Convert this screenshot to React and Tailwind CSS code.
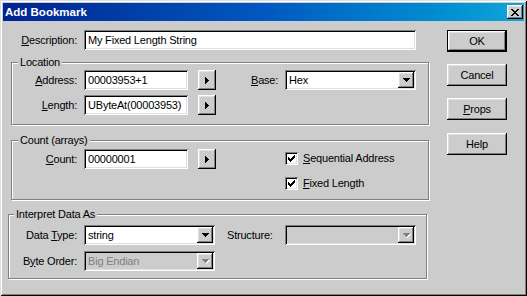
import React from 'react'

const raised = 'bg-[#cccccc] shadow-[inset_-1px_-1px_0_#000,inset_1px_1px_0_#fff,inset_-2px_-2px_0_#808080,inset_2px_2px_0_#dfdfdf]';
const sunken = 'shadow-[inset_1px_1px_0_#808080,inset_-1px_-1px_0_#fff,inset_2px_2px_0_#000,inset_-2px_-2px_0_#dfdfdf]';

const closeX = ['xx....xx', '.xx..xx.', '..xxxx..', '...xx...', '..xxxx..', '.xx..xx.', 'xx....xx'];
const rightArrow = ['x...', 'xx..', 'xxx.', 'xxxx', 'xxx.', 'xx..', 'x...'];
const downArrow = ['xxxxxxx', '.xxxxx.', '..xxx..', '...x...'];
const downArrowOff = ['xxxxxxx.', '.xxxxxww', '..xxxww.', '...xww..', '....w...'];
const check = ['......x', '.....xx', 'x...xxx', 'xx.xxx.', 'xxxxx..', '.xxx...', '..x....'];

// small pixel drawings, x = dark, w = white
function Pix({ rows, color = '#000' }) {
    return (
        <svg width={rows[0].length} height={rows.length} shapeRendering="crispEdges" className="block">
            {rows.flatMap((r, y) => [...r].map((c, x) => c === '.' ? null : (
                <rect key={x + '-' + y} x={x} y={y} width="1" height="1" fill={c === 'w' ? '#fff' : color} />
            )))}
        </svg>
    )
}

function U({ children }) {
    return <span className="underline decoration-1 underline-offset-[1px]">{children}</span>
}

function Field({ w, children }) {
    return (
        <div className={w + ' h-[20px] bg-white flex items-center pl-[4px] whitespace-nowrap overflow-hidden ' + sunken}>
            {children}
        </div>
    )
}

function Combo({ value, disabled }) {
    return (
        <div className={'w-[131px] h-[20px] flex items-center p-[2px] ' + sunken + (disabled ? ' bg-[#cccccc]' : ' bg-white')}>
            <div className={'flex-1 pl-[2px] whitespace-nowrap ' + (disabled ? 'text-[#808080]' : '')}>{value}</div>
            <div className={'w-[16px] h-[16px] flex items-center justify-center ' + raised}>
                {disabled ? <div className="ml-[1px] mt-[1px]"><Pix rows={downArrowOff} color="#808080" /></div> : <Pix rows={downArrow} />}
            </div>
        </div>
    )
}

function ArrowBtn() {
    return (
        <div className={'ml-[10px] w-[18px] h-[20px] flex items-center justify-center ' + raised}>
            <Pix rows={rightArrow} />
        </div>
    )
}

function Check({ children }) {
    return (
        <div className="flex items-center h-[13px]">
            <div className={'w-[13px] h-[13px] bg-white flex items-center justify-center ' + sunken}>
                <Pix rows={check} />
            </div>
            <span className="ml-[5px]">{children}</span>
        </div>
    )
}

function Group({ className, label, labelLeft, children }) {
    return (
        <div className={'relative border border-[#808080] shadow-[inset_1px_1px_0_#fff,1px_1px_0_#fff] ' + className}>
            <span className={'absolute -top-[7px] px-[2px] bg-[#cccccc] leading-[13px] ' + labelLeft}>{label}</span>
            {children}
        </div>
    )
}

function Button({ children, isDefault }) {
    if (isDefault) {
        return (
            <div className="w-[60px] h-[22px] border border-black">
                <div className={'w-full h-full flex items-center justify-center ' + raised}>{children}</div>
            </div>
        )
    }
    return <div className={'w-[60px] h-[22px] flex items-center justify-center ' + raised}>{children}</div>
}

export default function App() {
    return (
        <div className="w-[527px] h-[296px] bg-[#cccccc] p-[3px] font-['Liberation_Sans',Arial,sans-serif] text-[11px] leading-[13px] tracking-[-0.2px] text-black shadow-[inset_1px_1px_0_#dfdfdf,inset_-1px_-1px_0_#000,inset_2px_2px_0_#fff,inset_-2px_-2px_0_#808080]">
            <div className="h-[18px] flex items-center justify-between pl-[2px] pr-[1px] bg-gradient-to-r from-[#00238f] via-[#0058c0] to-[#12a6d8]">
                <span className="text-white font-bold text-[11.5px] tracking-normal">Add Bookmark</span>
                <div className={'w-[16px] h-[14px] flex items-center justify-center ' + raised}>
                    <Pix rows={closeX} />
                </div>
            </div>

            <div className="flex">
                <div className="w-[427px] flex flex-col">
                    <div className="flex items-center mt-[9px]">
                        <div className="w-[74px] text-right"><U>D</U>escription:</div>
                        <div className="ml-[7px]"><Field w="w-[332px]">My Fixed Length String</Field></div>
                    </div>

                    <Group className="ml-[8px] mt-[12px] w-[418px] h-[63px] pt-[7px]" label="Location" labelLeft="left-[6px]">
                        <div className="flex items-center">
                            <div className="w-[65px] text-right"><U>A</U>ddress:</div>
                            <div className="ml-[7px]"><Field w="w-[104px]">00003953+1</Field></div>
                            <ArrowBtn />
                            <div className="ml-[35px] w-[34px]"><U>B</U>ase:</div>
                            <Combo value="Hex" />
                        </div>
                        <div className="flex items-center mt-[5px]">
                            <div className="w-[65px] text-right"><U>L</U>ength:</div>
                            <div className="ml-[7px]"><Field w="w-[104px]">UByteAt(00003953)</Field></div>
                            <ArrowBtn />
                        </div>
                    </Group>

                    <Group className="ml-[8px] mt-[15px] w-[418px] h-[60px] pt-[8px]" label="Count (arrays)" labelLeft="left-[6px]">
                        <div className="flex items-start">
                            <div className="flex items-center">
                                <div className="w-[65px] text-right"><U>C</U>ount:</div>
                                <div className="ml-[7px]"><Field w="w-[104px]">00000001</Field></div>
                                <ArrowBtn />
                            </div>
                            <div className="ml-[69px] mt-[3px] flex flex-col gap-[12px]">
                                <Check><U>S</U>equential Address</Check>
                                <Check><U>F</U>ixed Length</Check>
                            </div>
                        </div>
                    </Group>

                    <Group className="ml-[5px] mt-[14px] w-[419px] h-[65px] pt-[10px]" label="Interpret Data As" labelLeft="left-[5px]">
                        <div className="flex items-center">
                            <div className="w-[68px] text-right">Data <U>T</U>ype:</div>
                            <div className="ml-[7px]"><Combo value="string" /></div>
                            <div className="ml-[12px] w-[58px]">Structure:</div>
                            <Combo value="" disabled />
                        </div>
                        <div className="flex items-center mt-[6px]">
                            <div className="w-[68px] text-right">B<U>y</U>te Order:</div>
                            <div className="ml-[7px]"><Combo value="Big Endian" disabled /></div>
                        </div>
                    </Group>
                </div>

                <div className="ml-[17px] mt-[9px] flex flex-col">
                    <Button isDefault>OK</Button>
                    <div className="mt-[12px]"><Button>Cancel</Button></div>
                    <div className="mt-[12px]"><Button><span><U>P</U>rops</span></Button></div>
                    <div className="mt-[13px]"><Button>Help</Button></div>
                </div>
            </div>
        </div>
    )
}
